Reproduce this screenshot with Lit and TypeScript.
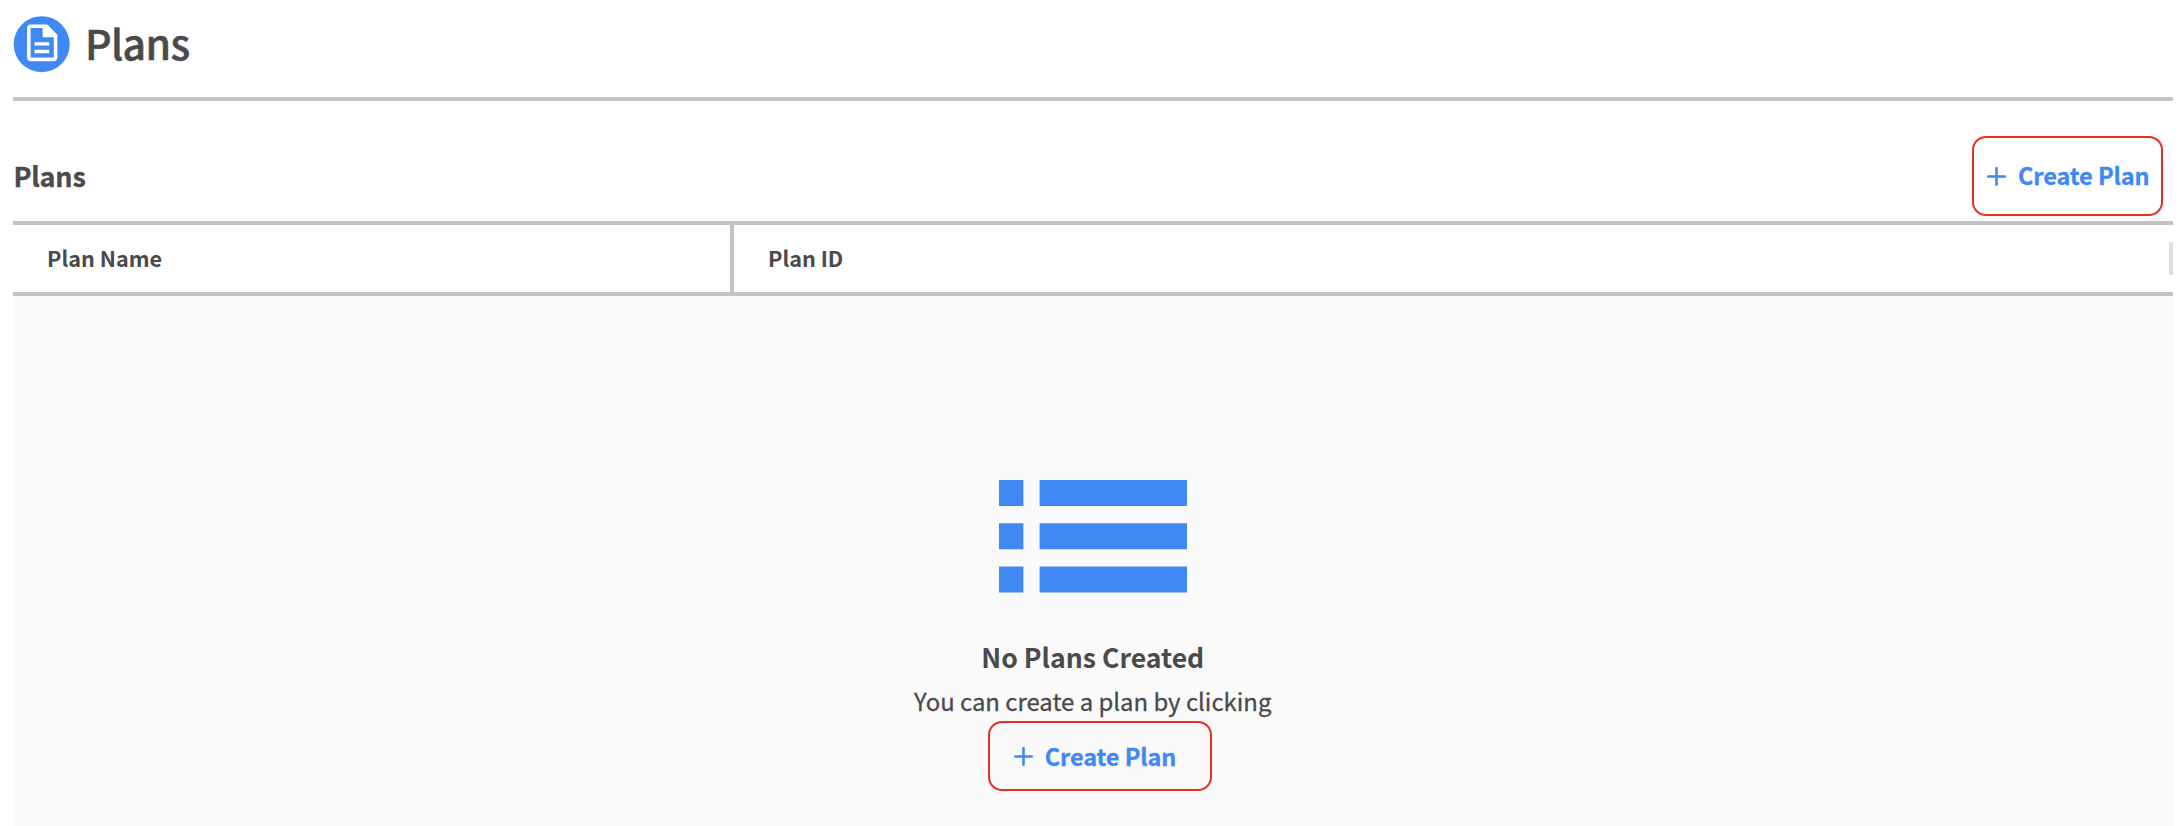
import { LitElement, html, css, svg } from "lit";
import { customElement } from "lit/decorators.js";

@customElement("create-plan-button")
export class CreatePlanButton extends LitElement {
  static styles = css`
    :host { display: block; }
    .button {
      display: flex; align-items: center; box-sizing: border-box;
      width: 100%; height: 100%; margin: 0; padding: 0 0 0 var(--button-inset, 14px);
      border: 2px solid #e8301f; border-radius: 14px; background: none;
      color: #4088f4; font: 700 23.5px/34px "Noto Sans CJK SC", sans-serif;
      letter-spacing: -0.1px; white-space: nowrap;
      -webkit-text-stroke: 0.3px #4088f4;
    }
    .plus { display: block; width: 19px; height: 19px; margin-right: 12px; flex: none; }
    .label { padding-bottom: var(--label-lift, 0); }
  `;
  render() {
    return html`<button class="button">
      <svg class="plus" viewBox="0 0 19 19"><path d="M9.5 1.2V17.8M1.2 9.5H17.8" fill="none" stroke="#4088f4" stroke-width="2.6" stroke-linecap="round"/></svg>
      <span class="label">Create Plan</span>
    </button>`;
  }
}

@customElement("app-root")
export class AppRoot extends LitElement {
  static styles = css`
    :host {
      display: flex; flex-direction: column; box-sizing: border-box;
      height: 826px; padding: 0 7.5px 0 13px; overflow: hidden;
      background: #fff; color: #4a4a4a; font-family: "Noto Sans CJK SC", sans-serif;
    }
    h1, h2, h3, p { margin: 0; white-space: nowrap; }
    .page-header {
      display: flex; flex: none; box-sizing: border-box; height: 101px;
      padding-top: 16px; border-bottom: 4px solid #c3c3c3;
    }
    .logo { display: block; width: 57px; height: 57px; margin-right: 15px; flex: none; }
    .title {
      font-size: 41px; line-height: 52px; font-weight: 500; letter-spacing: -0.6px;
      -webkit-text-stroke: 0.5px #4a4a4a;
    }
    .section {
      display: flex; flex: none; justify-content: space-between; box-sizing: border-box;
      height: 124px; padding: 35px 9.5px 0 0; border-bottom: 4px solid #c3c3c3;
    }
    .section-title {
      font-size: 27px; line-height: 40px; font-weight: 700; padding: 20px 0 0 0.5px;
      letter-spacing: -0.2px; -webkit-text-stroke: 0.3px #4a4a4a;
    }
    .top-action { width: 191px; height: 80px; --button-inset: 13px; --label-lift: 2px; }
    .columns {
      display: grid; grid-template-columns: 721px 1fr; flex: none; box-sizing: border-box;
      height: 71px; border-bottom: 4px solid #c3c3c3;
      font-size: 21.6px; line-height: 30px; font-weight: 700;
    }
    .column { display: flex; padding: 18px 0 0 34px; }
    .column + .column { justify-content: space-between; }
    .column:first-child { border-right: 4px solid #c3c3c3; }
    .tick { width: 4px; height: 33px; background: #e0e0e0; margin-top: -1px; }
    .empty {
      display: flex; flex: 1; flex-direction: column; align-items: center;
      background: #fafafa; padding-top: 184px;
    }
    .list-icon { display: block; width: 188px; height: 113px; flex: none; }
    .empty-title { font-size: 26.6px; line-height: 40px; font-weight: 700; margin-top: 44px; }
    .empty-text { font-size: 23.9px; line-height: 34px; font-weight: 400; margin-top: 7px; -webkit-text-stroke: 0.3px #4a4a4a; }
    .empty-action { width: 224px; height: 70px; margin: 3px 0 0 14px; --button-inset: 24px; }
  `;
  render() {
    return html`
      <header class="page-header">
        <svg class="logo" viewBox="0 0 57 57">
          <circle cx="28.7" cy="28.2" r="28" fill="#4088f4"/>
          <path d="M17.5 10.3H33.5L42.6 19.6V41Q42.6 43.4 40.2 43.4H18.2Q15.8 43.4 15.8 41V12.3Q15.8 10.3 17.5 10.3Z" fill="none" stroke="#fff" stroke-width="3.6" stroke-linejoin="round"/>
          <path d="M29.6 9V21.2H43L42 18L33.5 9ZM21.5 26.2H36.2V29.5H21.5ZM21.5 33.8H36.2V37.3H21.5Z" fill="#fff"/>
        </svg>
        <h1 class="title">Plans</h1>
      </header>
      <section class="section">
        <h2 class="section-title">Plans</h2>
        <create-plan-button class="top-action"></create-plan-button>
      </section>
      <div class="columns">
        <div class="column">Plan Name</div>
        <div class="column"><span>Plan ID</span><span class="tick"></span></div>
      </div>
      <main class="empty">
        <svg class="list-icon" viewBox="0 0 188 113">
          ${[0, 43.2, 86.4].map((y) => svg`<path d="M0 ${y}h24.4v26H0zM40.6 ${y}H188v26H40.6z" fill="#4088f4"/>`)}
        </svg>
        <h3 class="empty-title">No Plans Created</h3>
        <p class="empty-text">You can create a plan by clicking</p>
        <create-plan-button class="empty-action"></create-plan-button>
      </main>`;
  }
}
